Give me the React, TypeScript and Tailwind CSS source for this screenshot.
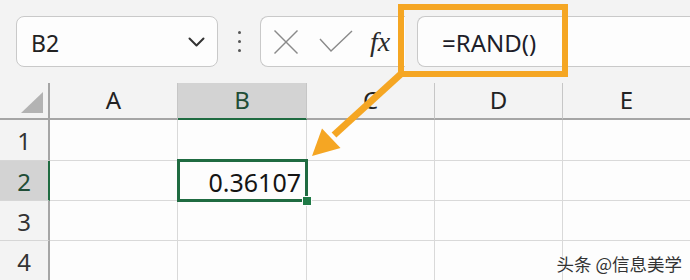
import React from "react";

const FONT = "font-['Noto_Sans','Liberation_Sans',sans-serif]";

function HeaderCell({ label, selected, last }: { label: string; selected?: boolean; last?: boolean }) {
  return (
    <div
      className={
        "flex items-center justify-center text-[24px] leading-none border-b-[2px] " +
        (last ? "" : "border-r border-r-[#c6c6c6] ") +
        (selected
          ? "bg-[#d3d3d3] text-[#1f4d36] border-b-[#1f6b41]"
          : "bg-[#f3f3f3] text-[#222] border-b-[#a5a5a5]")
      }
    >
      <span className="pb-[2px]">{label}</span>
    </div>
  );
}

function RowHeader({ n, selected }: { n: number; selected?: boolean }) {
  return (
    <div
      className={
        "flex items-center justify-center text-[24px] leading-none border-b border-b-[#d6d6d6] " +
        (selected
          ? "bg-[#d3d3d3] text-[#1f4d36] border-r-[2px] border-r-[#1f6b41]"
          : "bg-[#f3f3f3] text-[#333] border-r-[2px] border-r-[#a5a5a5]")
      }
    >
      <span className="pt-[2px]">{n}</span>
    </div>
  );
}

function Cell({ last, top, children }: { last?: boolean; top?: boolean; children?: React.ReactNode }) {
  return (
    <div
      className={
        "relative bg-[#fdfdfd] border-b border-b-[#d9d9d9] " +
        (last ? "" : "border-r border-r-[#d9d9d9] ") +
        (top ? "z-10" : "")
      }
    >
      {children}
    </div>
  );
}

export default function App() {
  const rows = [1, 2, 3, 4];
  return (
    <div className={"relative w-[690px] h-[280px] overflow-hidden bg-[#f3f3f3] " + FONT}>
      {/* toolbar */}
      <div className="flex h-[83px] pt-[16px] pl-[16px]">
        <div className="flex items-center justify-between w-[202px] h-[51px] rounded-[8px] border border-[#c9c9c9] bg-[#fdfdfd] pl-[14px] pr-[10px]">
          <span className="text-[23px] leading-none text-[#222] pt-[3px]">B2</span>
          <svg width="18" height="10" viewBox="0 0 18 10" className="mr-[1px]">
            <polyline points="1.5,1.5 8.5,8.5 15.5,1.5" fill="none" stroke="#333" strokeWidth="2" strokeLinecap="round" strokeLinejoin="round" />
          </svg>
        </div>
        <div className="flex w-[42px] h-[51px] flex-col items-center justify-center gap-[6px]">
          <div className="w-[3px] h-[3px] rounded-full bg-[#555]" />
          <div className="w-[3px] h-[3px] rounded-full bg-[#555]" />
          <div className="w-[3px] h-[3px] rounded-full bg-[#555]" />
        </div>
        <div className="flex items-center w-[145px] h-[51px] rounded-l-[8px] border border-r-0 border-[#c9c9c9] bg-[#fdfdfd]">
          <svg width="26" height="26" viewBox="0 0 26 26" className="ml-[12px]">
            <line x1="1.5" y1="1.5" x2="24.5" y2="24.5" stroke="#8a8a8a" strokeWidth="1.4" />
            <line x1="24.5" y1="1.5" x2="1.5" y2="24.5" stroke="#8a8a8a" strokeWidth="1.4" />
          </svg>
          <svg width="34" height="24" viewBox="0 0 34 24" className="ml-[20px]">
            <polyline points="1,9 12,21 33,1" fill="none" stroke="#8a8a8a" strokeWidth="1.4" />
          </svg>
          <span className="ml-[17px] text-[28px] leading-none italic text-[#2a2a2a] font-['Liberation_Serif',serif]">
            fx
          </span>
        </div>
        <div className="ml-[12px] flex items-center flex-1 h-[51px] rounded-l-[8px] border border-r-0 border-[#c9c9c9] bg-[#fdfdfd] pl-[24px]">
          <span className="text-[24px] leading-none text-[#1e1e2a] pt-[2px]">=RAND()</span>
        </div>
      </div>

      {/* grid */}
      <div className="grid grid-cols-[50px_128px_129px_128px_128px_127px] grid-rows-[37px_41px_40px_40px_40px]">
        <div className="relative bg-[#f3f3f3] border-r-[2px] border-r-[#a5a5a5] border-b-[2px] border-b-[#a5a5a5]">
          <svg width="48" height="35" viewBox="0 0 48 35" className="absolute left-0 top-0">
            <polygon points="43,9 43,30 21,30" fill="#b3b3b3" />
          </svg>
        </div>
        <HeaderCell label="A" />
        <HeaderCell label="B" selected />
        <HeaderCell label="C" />
        <HeaderCell label="D" />
        <HeaderCell label="E" last />
        {rows.map((r) => (
          <React.Fragment key={r}>
            <RowHeader n={r} selected={r === 2} />
            <Cell />
            <Cell top={r === 2}>
              {r === 2 && (
                <>
                  <div className="absolute -left-[1px] -top-[2px] -right-[2px] -bottom-[2px] border-[3px] border-[#1f6b41] flex items-center justify-end pr-[4px]">
                    <span className="text-[25px] leading-none text-[#141414] pt-[3px]">0.36107</span>
                  </div>
                  <div className="absolute -right-[6px] -bottom-[6px] w-[10px] h-[10px] bg-[#1f7a46] border border-[#fdfdfd]" />
                </>
              )}
            </Cell>
            <Cell />
            <Cell />
            <Cell last />
          </React.Fragment>
        ))}
      </div>

      {/* annotation overlay */}
      <svg width="690" height="280" viewBox="0 0 690 280" className="absolute left-0 top-0 z-20 pointer-events-none">
        <rect x="401" y="7" width="164" height="67" fill="none" stroke="#f5a623" strokeWidth="6" />
        <line x1="402" y1="73" x2="334" y2="135" stroke="#f5a623" strokeWidth="7" strokeLinecap="butt" />
        <polygon points="312,156 322,128.5 340.5,148" fill="#f5a623" />
      </svg>

      <div className="absolute z-20 right-[8px] bottom-[8px] text-[17.5px] leading-none text-[#333] font-['Noto_Sans_CJK_SC',sans-serif] [text-shadow:0_0_2px_#fff,0_0_2px_#fff]">
        头条 @信息美学
      </div>
    </div>
  );
}
